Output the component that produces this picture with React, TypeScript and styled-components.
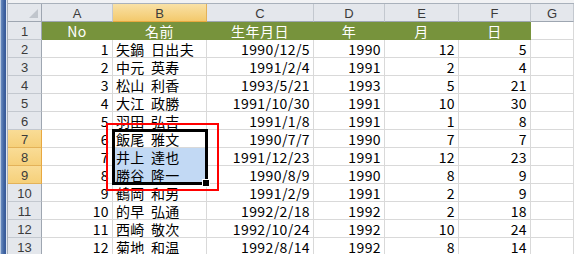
import React from 'react';
import styled, { createGlobalStyle, css } from 'styled-components';

const GlobalStyle = createGlobalStyle`
  html, body {
    margin: 0;
    padding: 0;
    width: 574px;
    height: 254px;
    overflow: hidden;
    background: #ffffff;
  }
  * {
    box-sizing: border-box;
  }
`;

const Window = styled.div`
  display: flex;
  width: 574px;
  height: 254px;
  overflow: hidden;
`;

const Frame = styled.div`
  flex: 0 0 8px;
  background: linear-gradient(
    to right,
    #b7c9e2 0px,
    #b7c9e2 1px,
    #6a8cc0 1px,
    #3f63a0 4px,
    #37599a 6px,
    #dfe7f2 6px,
    #dfe7f2 7px,
    #a7afba 7px
  );
`;

const Main = styled.div`
  flex: 1;
  display: flex;
  flex-direction: column;
  min-width: 0;
`;

const TopStrip = styled.div`
  flex: 0 0 4px;
  background: #f1f2f4;
  border-bottom: 1px solid #a9b1bb;
`;

const SheetWrap = styled.div`
  position: relative;
  flex: 1;
`;

const Sheet = styled.div`
  display: grid;
  grid-template-columns: 34px 71px 94px 107px 71px 74px 72px 1fr;
  grid-auto-rows: 18px;
  font-family: 'Noto Sans CJK JP', 'Noto Sans', sans-serif;
  font-size: 14px;
  color: #000000;
`;

const headerText = css`
  font-family: 'Liberation Sans', Arial, sans-serif;
  font-size: 13px;
  color: #3b3b3b;
  display: flex;
  align-items: center;
  justify-content: center;
  padding-top: 2px;
`;

const Corner = styled.div`
  display: flex;
  align-items: flex-end;
  justify-content: flex-end;
  padding: 0 3px 3px 0;
  background: #e4e7ec;
  border-right: 1px solid #9ea6b1;
  border-bottom: 1px solid #9ea6b1;
`;

const ColHeader = styled.div<{ $selected?: boolean }>`
  ${headerText};
  background: ${(p) =>
    p.$selected ? 'linear-gradient(#f9e1a6, #f3c96c)' : '#e4e7ec'};
  border-right: 1px solid ${(p) => (p.$selected ? '#e3b259' : '#c3c8cf')};
  border-bottom: 1px solid ${(p) => (p.$selected ? '#e8a840' : '#9ea6b1')};
`;

const RowHeader = styled.div<{ $selected?: boolean }>`
  ${headerText};
  background: ${(p) =>
    p.$selected ? 'linear-gradient(#f9dc96, #f6d07a)' : '#e4e7ec'};
  border-right: 1px solid ${(p) => (p.$selected ? '#e8a840' : '#9ea6b1')};
  border-bottom: 1px solid ${(p) => (p.$selected ? '#e3b259' : '#c3c8cf')};
`;

const TitleCell = styled.div<{ $filled?: boolean }>`
  display: flex;
  align-items: flex-end;
  justify-content: center;
  line-height: 16px;
  color: #ffffff;
  letter-spacing: 0.5px;
  background: ${(p) => (p.$filled ? '#77933c' : '#ffffff')};
  border-right: 1px solid ${(p) => (p.$filled ? '#77933c' : '#d9d9d9')};
  border-bottom: 1px solid ${(p) => (p.$filled ? '#77933c' : '#d9d9d9')};
`;

const DataCell = styled.div<{ $align?: 'left' | 'right'; $selected?: boolean }>`
  display: flex;
  align-items: flex-end;
  justify-content: ${(p) => (p.$align === 'left' ? 'flex-start' : 'flex-end')};
  padding: 0 3px 0 3px;
  line-height: 16px;
  white-space: nowrap;
  overflow: hidden;
  letter-spacing: ${(p) => (p.$align === 'left' ? '0.3px' : '0.4px')};
  word-spacing: ${(p) => (p.$align === 'left' ? '3px' : '0')};
  background: ${(p) => (p.$selected ? '#c2d9f4' : '#ffffff')};
  border-right: 1px solid #d9d9d9;
  border-bottom: 1px solid ${(p) => (p.$selected ? '#c2d9f4' : '#d9d9d9')};
`;

const SelectionBox = styled.div`
  position: absolute;
  left: 104px;
  top: 125px;
  width: 96px;
  height: 56px;
  border: 3px solid #000000;
  pointer-events: none;
`;

const FillHandle = styled.div`
  position: absolute;
  left: 194px;
  top: 175px;
  width: 8px;
  height: 8px;
  background: #000000;
  border: 1px solid #ffffff;
`;

const Annotation = styled.div`
  position: absolute;
  left: 98px;
  top: 119px;
  width: 113px;
  height: 68px;
  border: 2px solid #ff0000;
  pointer-events: none;
`;

type Row = [number, string, string, number, number, number];

const rows: Row[] = [
  [1, '矢鍋 日出夫', '1990/12/5', 1990, 12, 5],
  [2, '中元 英寿', '1991/2/4', 1991, 2, 4],
  [3, '松山 利香', '1993/5/21', 1993, 5, 21],
  [4, '大江 政勝', '1991/10/30', 1991, 10, 30],
  [5, '羽田 弘吉', '1991/1/8', 1991, 1, 8],
  [6, '飯尾 雅文', '1990/7/7', 1990, 7, 7],
  [7, '井上 達也', '1991/12/23', 1991, 12, 23],
  [8, '勝谷 隆一', '1990/8/9', 1990, 8, 9],
  [9, '鶴岡 和男', '1991/2/9', 1991, 2, 9],
  [10, '的早 弘通', '1992/2/18', 1992, 2, 18],
  [11, '西崎 敬次', '1992/10/24', 1992, 10, 24],
  [12, '菊地 和温', '1992/8/14', 1992, 8, 14],
];

const columns = ['A', 'B', 'C', 'D', 'E', 'F', 'G'];
const titles = ['No', '名前', '生年月日', '年', '月', '日'];

// sheet rows 7..9 are selected, row 8 and 9 get the blue tint
const selectedRows = [7, 8, 9];
const tintedRows = [8, 9];

export default function App() {
  return (
    <>
      <GlobalStyle />
      <Window>
        <Frame />
        <Main>
          <TopStrip />
          <SheetWrap>
            <Sheet>
              <Corner>
                <svg width="9" height="9" viewBox="0 0 9 9">
                  <polygon points="9,0 9,9 0,9" fill="#c0c5cc" />
                </svg>
              </Corner>
              {columns.map((c) => (
                <ColHeader key={c} $selected={c === 'B'}>
                  {c}
                </ColHeader>
              ))}

              <RowHeader>1</RowHeader>
              {titles.map((t) => (
                <TitleCell key={t} $filled>
                  {t}
                </TitleCell>
              ))}
              <TitleCell />

              {rows.map((r, i) => {
                const sheetRow = i + 2;
                const tinted = tintedRows.includes(sheetRow);
                return (
                  <React.Fragment key={sheetRow}>
                    <RowHeader $selected={selectedRows.includes(sheetRow)}>
                      {sheetRow}
                    </RowHeader>
                    <DataCell>{r[0]}</DataCell>
                    <DataCell $align="left" $selected={tinted}>
                      {r[1]}
                    </DataCell>
                    <DataCell>{r[2]}</DataCell>
                    <DataCell>{r[3]}</DataCell>
                    <DataCell>{r[4]}</DataCell>
                    <DataCell>{r[5]}</DataCell>
                    <DataCell />
                  </React.Fragment>
                );
              })}
              <RowHeader>13</RowHeader>
            </Sheet>
            <Annotation />
            <SelectionBox />
            <FillHandle />
          </SheetWrap>
        </Main>
      </Window>
    </>
  );
}
